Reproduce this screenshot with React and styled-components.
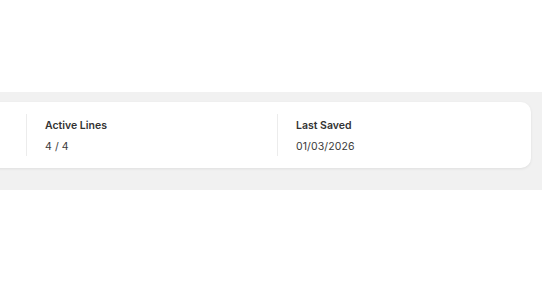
import React from "react";
import styled, { createGlobalStyle } from "styled-components";

const Global = createGlobalStyle`
  html, body { margin: 0; padding: 0; background: #ffffff; }
  body { font-family: Inter, "Noto Sans", sans-serif; -webkit-font-smoothing: antialiased; }
`;

const Page = styled.div`
  width: 542px;
  height: 305px;
  padding-top: 92px;
  box-sizing: border-box;
  overflow: hidden;
`;

const Band = styled.section`
  background: #f1f1f1;
  display: flex;
  justify-content: flex-end;
  padding: 10px 11px 22px 0;
  overflow: hidden;
`;

const Card = styled.div`
  flex-shrink: 0;
  width: 756px;
  box-sizing: border-box;
  background: #ffffff;
  border-radius: 10px;
  box-shadow: 0 1px 3px rgba(0, 0, 0, 0.08);
  padding: 12px 3px 12px 0;
  display: grid;
  grid-template-columns: repeat(3, 251px);
`;

const Stat = styled.div`
  padding: 4px 18px 1px;
  border-left: ${(p) => (p.$first ? "none" : "1px solid #ececec")};
  display: flex;
  flex-direction: column;
  gap: 5px;
`;

const Label = styled.div`
  font-size: 10.5px;
  line-height: 16px;
  font-weight: 600;
  color: #333333;
`;

const Value = styled.div`
  font-size: 10.5px;
  line-height: 16px;
  font-weight: 400;
  color: #3a3a3a;
  letter-spacing: 0.1px;
`;

const stats = [
  { label: "Active Lines", value: "4 / 4" },
  { label: "Last Saved", value: "01/03/2026" },
];

export default function App() {
  return (
    <Page>
      <Global />
      <Band>
        <Card>
          <Stat $first />
          {stats.map((s) => (
            <Stat key={s.label}>
              <Label>{s.label}</Label>
              <Value>{s.value}</Value>
            </Stat>
          ))}
        </Card>
      </Band>
    </Page>
  );
}
